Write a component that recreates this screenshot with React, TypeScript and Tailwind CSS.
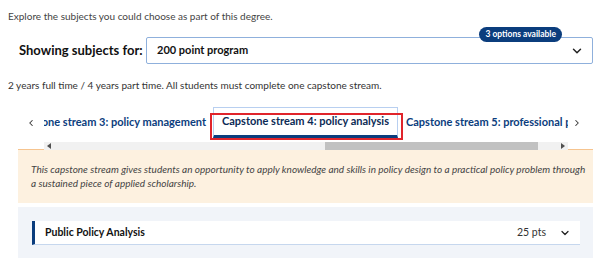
import { ChevronDown, ChevronLeft, ChevronRight } from 'lucide-react';

const font = { fontFamily: '"Source Sans Pro", Lato, "Noto Sans", sans-serif' };

export default function App() {
  return (
    <div className="w-[600px] h-[270px] overflow-hidden bg-white text-[#333]" style={font}>
      <p className="pl-2 pt-[9px] text-[10px] leading-[14px] text-[#444]">
        Explore the subjects you could choose as part of this degree.
      </p>

      <div className="flex items-center mt-[14px] pl-[19px] pr-[7px]">
        <span className="text-[13px] font-bold text-[#111] w-[127px] whitespace-nowrap">Showing subjects for:</span>
        <div className="relative flex-1 h-[27px] border border-[#8fb0dc] rounded-[2px] flex items-center pl-[10px] pr-[8px]">
          <span className="text-[11px] font-bold text-[#111]">200 point program</span>
          <ChevronDown className="ml-auto w-[14px] h-[14px] text-[#222]" strokeWidth={2.5} />
          <span className="absolute right-[30px] top-[-11px] bg-[#0b3d7d] text-white text-[8.5px] font-bold leading-[15px] px-[6px] rounded-full">
            3 options available
          </span>
        </div>
      </div>

      <p className="pl-2 mt-[14px] text-[10px] leading-[14px] text-[#333]">
        2 years full time / 4 years part time. All students must complete one capstone stream.
      </p>

      <div className="flex items-start mt-[15px] pl-[26px]">
        <div className="w-[18px] h-[31px] flex items-center">
          <ChevronLeft className="w-[10px] h-[10px] text-[#333]" strokeWidth={2.5} />
        </div>
        <div className="w-[524px]">
          <div className="h-[35px] overflow-hidden">
            <div className="flex items-start text-[11px] font-bold text-[#0b3d7d] whitespace-nowrap">
              <div className="w-[169px] shrink-0 h-[31px] flex items-center justify-end pr-[7px]">Capstone stream 3: policy management</div>
              <div className="relative shrink-0 w-[185px] h-[31px] flex items-center justify-center border border-b-[3px] border-[#b8cff0] border-b-[#0b3d7d] text-[#0b2a55]">
                Capstone stream 4: policy analysis
                <div className="absolute left-[-4px] right-[-6px] top-[5px] bottom-[-5px] border-2 border-[#e0242b]" />
              </div>
              <div className="h-[31px] flex items-center pl-[8px]">Capstone stream 5: professional practice</div>
            </div>
          </div>
          <div className="relative z-10 h-[8px] mb-[-1px] bg-[#f1f1f1] flex items-center">
            <span className="ml-[3px] w-0 h-0 border-y-[3px] border-y-transparent border-r-[4px] border-r-[#505050]" />
            <div className="absolute left-[281px] w-[213px] h-[8px] bg-[#c1c1c1]" />
            <span className="ml-auto mr-[3px] w-0 h-0 border-y-[3px] border-y-transparent border-l-[4px] border-l-[#505050]" />
          </div>
        </div>
        <div className="w-[18px] h-[31px] flex items-center justify-center">
          <ChevronRight className="w-[10px] h-[10px] text-[#333]" strokeWidth={2.5} />
        </div>
      </div>

      <div className="ml-[18px] mr-[7px] bg-[#fdf1e0] border-t border-[#f6c48f]">
        <p className="pl-[13px] pr-[6px] pt-[12px] pb-[13px] text-[10px] leading-[14px] italic text-[#444]">
          This capstone stream gives students an opportunity to apply knowledge and skills in policy design to a practical policy problem through a sustained piece of applied scholarship.
        </p>
      </div>

      <div className="ml-[18px] mr-[7px] mt-[4px] bg-[#f1f4f9] pl-[14px] pr-[13px] pt-[14px] pb-[13px]">
        <div className="h-[24px] bg-white border-l-[3px] border-l-[#0b3d7d] border-b border-b-[#c6d7ee] flex items-center pl-[10px] pr-[9px]">
          <span className="text-[10.5px] font-bold text-[#111]">Public Policy Analysis</span>
          <span className="ml-auto text-[10.5px] text-[#333]">25 pts</span>
          <ChevronDown className="ml-[13px] w-[12px] h-[12px] text-[#222]" strokeWidth={2.5} />
        </div>
      </div>
    </div>
  );
}
